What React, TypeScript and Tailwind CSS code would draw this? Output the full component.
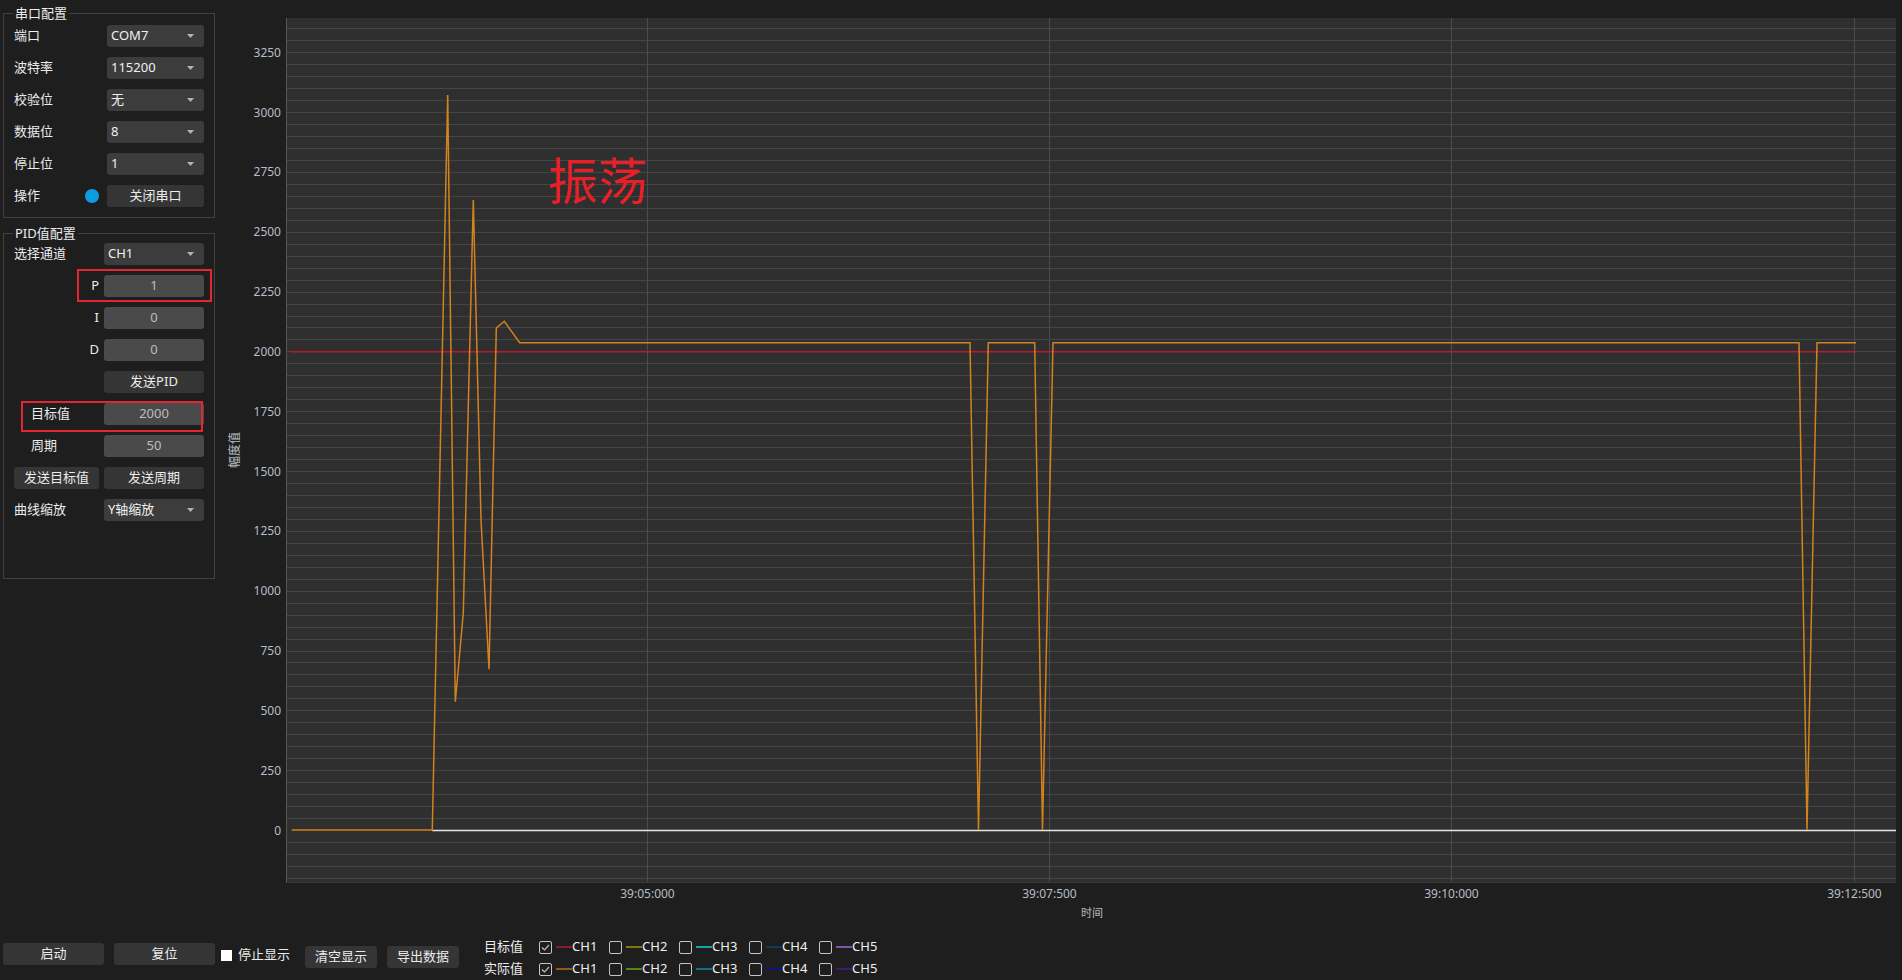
import React from "react";

const FONT = '"Noto Sans", "Noto Sans CJK SC", sans-serif';

function Arrow() {
  return (
    <svg width="7" height="4" viewBox="0 0 7 4" className="shrink-0">
      <polygon points="0,0 7,0 3.5,4" fill="#b4b4b4" />
    </svg>
  );
}

function Combo({ value, w }: { value: string; w: string }) {
  return (
    <div className={`${w} h-[22px] bg-[#3c3c3c] rounded-[3px] flex items-center justify-between pl-[4px] pr-[10px] text-[13px] text-[#f0f0f0]`}>
      <span>{value}</span>
      <Arrow />
    </div>
  );
}

function Btn({ label, w }: { label: string; w: string }) {
  return (
    <div className={`${w} h-[22px] bg-[#353535] rounded-[3px] flex items-center justify-center text-[13px] text-[#ececec]`}>
      {label}
    </div>
  );
}

function Input({ value }: { value: string }) {
  return (
    <div className="w-[100px] h-[22px] bg-[#4a4a4a] rounded-[3px] flex items-center justify-center text-[13px] text-[#bdbdbd]">
      {value}
    </div>
  );
}

function CheckBox({ checked }: { checked: boolean }) {
  return (
    <div className="w-[13px] h-[13px] border-[1.5px] border-[#c4c4c4] rounded-[2px] flex items-center justify-center shrink-0">
      {checked && (
        <svg width="9" height="7" viewBox="0 0 9 7">
          <polyline points="1,3.5 3.5,6 8,1" fill="none" stroke="#bdbdbd" strokeWidth="1.2" />
        </svg>
      )}
    </div>
  );
}

const targetColors = ["#8c1a2a", "#7a7a12", "#13a3a3", "#143c4c", "#8452aa"];
const actualColors = ["#8c5c1c", "#4c8a12", "#126c8c", "#12127c", "#3c1c6c"];

function LegendRow({ label, colors, checkedFirst }: { label: string; colors: string[]; checkedFirst: boolean }) {
  return (
    <div className="h-[22px] flex items-center">
      <div className="w-[55px] text-[13px] text-[#ececec]">{label}</div>
      {colors.map((c, i) => (
        <div key={i} className="w-[70px] flex items-center">
          <CheckBox checked={checkedFirst && i === 0} />
          <div className="ml-[4px] w-[16px] h-[2px]" style={{ backgroundColor: c }} />
          <span className="text-[13px] text-[#f0f0f0]">CH{i + 1}</span>
        </div>
      ))}
    </div>
  );
}

function Chart() {
  const zeroY = 830;
  const minor = 11.965;
  const hLines: number[] = [];
  for (let k = -4; k <= 67; k++) {
    if (k === 0) continue;
    hLines.push(Math.round(zeroY - minor * k) + 0.5);
  }
  const vLines = [647, 1049, 1451, 1854];
  const xLabels = ["39:05:000", "39:07:500", "39:10:000", "39:12:500"];
  const yTicks = Array.from({ length: 14 }, (_, k) => k);
  const orange: [number, number][] = [
    [291.7, 830], [432.3, 830], [447.7, 95], [455.3, 701.7], [463.3, 613], [473.3, 200],
    [481, 520], [489, 669.3], [496.3, 328], [504.3, 321.3], [519.7, 342.7], [970, 342.7],
    [978.5, 830], [988.3, 342.7], [1034.7, 342.7], [1042.5, 830], [1053, 342.7], [1799, 342.7],
    [1807, 830], [1817, 342.7], [1856, 342.7],
  ];
  return (
    <svg width="1682" height="930" viewBox="220 0 1682 930" className="block" style={{ fontFamily: FONT }}>
      <rect x="220" y="0" width="1682" height="930" fill="#1e1e1e" />
      <rect x="286" y="18" width="1610" height="864" fill="#2f2f2f" />
      {hLines.map((y, i) => (
        <line key={i} x1="287" x2="1896" y1={y} y2={y} stroke="#454545" strokeWidth="1" />
      ))}
      {vLines.map((x, i) => (
        <line key={i} x1={x + 0.5} x2={x + 0.5} y1="18" y2="882" stroke="#4c4c4c" strokeWidth="1" />
      ))}
      <line x1="286.5" x2="286.5" y1="18" y2="882" stroke="#555555" strokeWidth="1" />
      <line x1="286" x2="1896" y1="882.5" y2="882.5" stroke="#3a3a3a" strokeWidth="1" />
      {yTicks.map((k) => (
        <text key={k} x="281" y={zeroY - 59.82 * k} textAnchor="end" dominantBaseline="central" fontSize="12" fill="#b6bdc4">
          {k * 250}
        </text>
      ))}
      {xLabels.map((t, i) => (
        <text key={i} x={vLines[i] + 0.5} y="893" textAnchor="middle" dominantBaseline="central" fontSize="12" fill="#b6bdc4">
          {t}
        </text>
      ))}
      <text x="1092" y="912.5" textAnchor="middle" dominantBaseline="central" fontSize="11" fill="#b6bdc4">
        时间
      </text>
      <text x="234" y="450" textAnchor="middle" dominantBaseline="central" fontSize="12" fill="#b6bdc4" transform="rotate(-90 234 450)">
        幅度值
      </text>
      <line x1="432" x2="1896" y1="830.5" y2="830.5" stroke="#e6e6e6" strokeWidth="1.5" />
      <line x1="290" x2="1856" y1="351.7" y2="351.7" stroke="#b81c2c" strokeWidth="1.5" />
      <polyline
        points={orange.map((p) => p.join(",")).join(" ")}
        fill="none"
        stroke="#d2831e"
        strokeWidth="1.5"
        strokeLinejoin="miter"
      />
      <text x="548" y="200" fontSize="50" fill="#e8202a" style={{ fontFamily: '"Noto Sans CJK SC", sans-serif' }}>
        振荡
      </text>
    </svg>
  );
}

export default function App() {
  return (
    <div className="w-[1902px] h-[980px] bg-[#1e1e1e] flex flex-col overflow-hidden text-[#ececec]" style={{ fontFamily: FONT }}>
      <div className="flex h-[930px]">
        <div className="w-[220px] shrink-0 pl-[3px] pt-[13px]">
          {/* 串口配置 */}
          <div className="relative w-[212px] h-[205px] border border-[#404040] pt-[11px] pl-[10px]">
            <div className="absolute top-[-9px] left-[9px] px-[2px] bg-[#1e1e1e] text-[13px] leading-[16px] text-[#ececec]">串口配置</div>
            <div className="flex flex-col gap-[10px]">
              {[
                ["端口", "COM7"],
                ["波特率", "115200"],
                ["校验位", "无"],
                ["数据位", "8"],
                ["停止位", "1"],
              ].map(([l, v]) => (
                <div key={l} className="flex items-center h-[22px]">
                  <div className="w-[93px] text-[13px]">{l}</div>
                  <Combo value={v} w="w-[97px]" />
                </div>
              ))}
              <div className="flex items-center h-[22px]">
                <div className="w-[71px] text-[13px]">操作</div>
                <div className="w-[14px] h-[14px] rounded-full bg-[#0b9de0]" />
                <div className="w-[8px]" />
                <Btn label="关闭串口" w="w-[97px]" />
              </div>
            </div>
          </div>
          {/* PID值配置 */}
          <div className="relative mt-[15px] w-[212px] h-[346px] border border-[#404040] pt-[9px] pl-[10px]">
            <div className="absolute top-[-9px] left-[9px] px-[2px] bg-[#1e1e1e] text-[13px] leading-[16px] text-[#ececec]">PID值配置</div>
            <div className="flex flex-col gap-[10px]">
              <div className="flex items-center h-[22px]">
                <div className="w-[90px] text-[13px]">选择通道</div>
                <Combo value="CH1" w="w-[100px]" />
              </div>
              {[
                ["P", "1"],
                ["I", "0"],
                ["D", "0"],
              ].map(([l, v]) => (
                <div key={l} className="flex items-center h-[22px]">
                  <div className="w-[85px] mr-[5px] text-right text-[13px] font-normal">{l}</div>
                  <Input value={v} />
                </div>
              ))}
              <div className="flex items-center h-[22px]">
                <div className="w-[90px]" />
                <Btn label="发送PID" w="w-[100px]" />
              </div>
              <div className="flex items-center h-[22px]">
                <div className="w-[90px] pl-[17px] text-[13px]">目标值</div>
                <Input value="2000" />
              </div>
              <div className="flex items-center h-[22px]">
                <div className="w-[90px] pl-[17px] text-[13px]">周期</div>
                <Input value="50" />
              </div>
              <div className="flex items-center h-[22px] gap-[5px]">
                <Btn label="发送目标值" w="w-[85px]" />
                <Btn label="发送周期" w="w-[100px]" />
              </div>
              <div className="flex items-center h-[22px]">
                <div className="w-[90px] text-[13px]">曲线缩放</div>
                <Combo value="Y轴缩放" w="w-[100px]" />
              </div>
            </div>
            <div className="absolute left-[73px] top-[35px] w-[135px] h-[33px] border-2 border-[#e3262f]" />
            <div className="absolute left-[17px] top-[167px] w-[182px] h-[31px] border-2 border-[#e3262f]" />
          </div>
        </div>
        <Chart />
      </div>
      <div className="h-[50px] flex items-start pl-[3px]">
        <div className="mt-[13px]">
          <Btn label="启动" w="w-[101px]" />
        </div>
        <div className="mt-[13px] ml-[10px]">
          <Btn label="复位" w="w-[101px]" />
        </div>
        <div className="mt-[17px] ml-[6px] flex items-center h-[16px]">
          <div className="w-[11px] h-[11px] bg-white" />
          <span className="ml-[6px] text-[13px]">停止显示</span>
        </div>
        <div className="mt-[16px] ml-[15px]">
          <Btn label="清空显示" w="w-[72px]" />
        </div>
        <div className="mt-[16px] ml-[10px]">
          <Btn label="导出数据" w="w-[72px]" />
        </div>
        <div className="mt-[6px] ml-[25px] flex flex-col">
          <LegendRow label="目标值" colors={targetColors} checkedFirst />
          <LegendRow label="实际值" colors={actualColors} checkedFirst />
        </div>
      </div>
    </div>
  );
}
